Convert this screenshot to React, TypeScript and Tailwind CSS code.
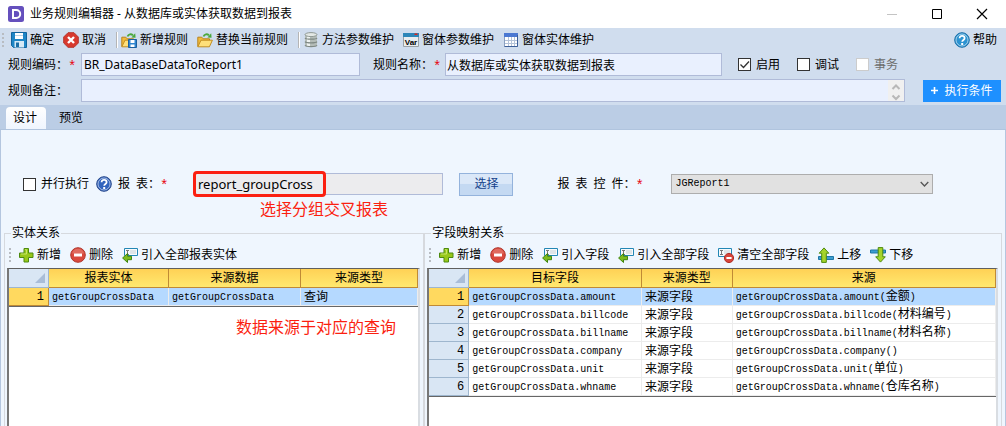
import type { ReactNode } from "react";

const cjk = "font-['Noto_Sans','Noto_Sans_CJK_SC',sans-serif]";

function Icon({ children }: { children: ReactNode }) {
  return (
    <svg className="h-4 w-4 shrink-0" viewBox="0 0 16 16" fill="none">
      {children}
    </svg>
  );
}

const SaveIcon = () => (
  <Icon>
    <path d="M.5.5h15v15H2.5l-2-2z" fill="#1f86c6" stroke="#11659f" />
    <path d="M4 1h8v6H4z" fill="#fff" />
    <path d="M4 3h8v1H4z" fill="#b9d4e6" />
    <path d="M3.5 9h9.5v6.5H3.5z" fill="#d7eaf6" />
    <path d="M5 10.5h3V15H5z" fill="#1b6ea6" />
  </Icon>
);

const CancelIcon = () => (
  <Icon>
    <path
      d="M5 .7h6L15.3 5v6L11 15.3H5L.7 11V5z"
      fill="#d8392e"
      stroke="#b5382f"
      strokeLinejoin="round"
    />
    <path d="M5 5l6 6M11 5l-6 6" stroke="#fff" strokeWidth="2.4" />
  </Icon>
);

const FolderBase = () => (
  <>
    <path d="M.8 14.5V5.2h4l1.4 1.6h6.3v2" fill="#f1bb3c" stroke="#b9831c" />
    <path d="M.8 14.8L4 8.2h11.4l-3 6.6z" fill="#ffe07a" stroke="#c28d20" />
    <path d="M6.5 4.5C7.5 2 10 1.8 12 3.2" stroke="#4ba83c" strokeWidth="2" />
    <path d="M10.4 5.6l4.2.2-.4-4.6z" fill="#4ba83c" />
  </>
);

const FolderSaveIcon = () => (
  <Icon>
    <FolderBase />
    <path d="M7.5 7.5h8v8h-8z" fill="#2f86d0" stroke="#1b5f9e" />
    <path d="M9.5 8h4v3h-4zM9.5 12.5h4V15h-4z" fill="#fff" />
  </Icon>
);

const FolderIcon = () => (
  <Icon>
    <FolderBase />
  </Icon>
);

const DatabaseIcon = () => (
  <Icon>
    <path d="M2 2.5v11C2 15 14 15 14 13.5v-11z" fill="#b4bcb8" />
    <path d="M4 4v10.5h3V4z" fill="#eef2f0" />
    <ellipse cx="8" cy="2.6" rx="6" ry="2" fill="#e3e8e5" stroke="#8f9994" />
    <path
      d="M2 6c1 1.6 11 1.6 12 0M2 9.6c1 1.6 11 1.6 12 0M2 13.2c1 1.8 11 1.8 12 0"
      stroke="#7f8984"
      strokeWidth="1.2"
    />
  </Icon>
);

const VarIcon = () => (
  <Icon>
    <path d="M.5 1.5h15v13H.5z" fill="#e9edf0" stroke="#9aa1a6" />
    <path d="M0 1h16v4H0z" fill="#2e86b8" />
    <path d="M11.5 1.5h3V3h-3z" fill="#e0261c" />
    <text
      x="8"
      y="12.5"
      textAnchor="middle"
      className="fill-black font-['Liberation_Sans',sans-serif] text-[8px] font-bold"
    >
      Var
    </text>
  </Icon>
);

const GridIcon = () => (
  <Icon>
    <path d="M1.5 1.5h13v13h-13z" fill="#fff" stroke="#8aa0c0" />
    <path d="M1 1h14v4H1z" fill="#4b78d2" />
    <path d="M2 8.5h12M2 11.5h12M5.5 5v9M8.5 5v9M11.5 5v9" stroke="#b4c3d9" />
    <path d="M14.5 3v11.5h-13" stroke="#3d5f98" />
  </Icon>
);

const AddIcon = () => (
  <Icon>
    <path
      d="M6 1.5h4.5V6H15v4.5h-4.5V15H6v-4.5H1.5V6H6z"
      fill="#97c81a"
      stroke="#4d8a0e"
      strokeLinejoin="round"
    />
    <path d="M7 2.7h1.5V7H3" stroke="#c6e568" />
  </Icon>
);

const RemoveIcon = () => (
  <Icon>
    <circle cx="8" cy="8" r="7.3" fill="#d9493d" stroke="#b0362c" />
    <path d="M2 6.5a6.2 6.2 0 0112 0z" fill="#e06a5e" />
    <path d="M4 6.5h8v3H4z" fill="#fff" />
  </Icon>
);

const ImportIcon = () => (
  <Icon>
    <path d="M2.5 1.5h13v7h-13z" fill="#f7fafc" stroke="#2387b5" />
    <path d="M4 3.5h3M5.5 3.5v4M4 7.5h3" stroke="#777" />
    <path d="M8 3h6v4H8z" fill="#dfe5e8" />
    <path
      d="M.6 11L5.5 6.5v2.8h4v3.4h-4v2.8z"
      fill="#7dbb1c"
      stroke="#3f850f"
      strokeLinejoin="round"
    />
  </Icon>
);

const ClearIcon = () => (
  <Icon>
    <path d="M.5 1.5h13v8H.5z" fill="#f7fafc" stroke="#2387b5" />
    <path d="M2 3.5h3M3.5 3.5v4M2 7.5h3" stroke="#777" />
    <path d="M6 3h6v4H6z" fill="#dfe5e8" />
    <circle cx="11" cy="11" r="4.6" fill="#d8443a" stroke="#ae3028" />
    <path d="M8.4 10h5.2v2H8.4z" fill="#fff" />
  </Icon>
);

const UpIcon = () => (
  <Icon>
    <path d="M.5 9.5h5v3h-5zM8.5 9.5h7v3h-7z" fill="#3d9ed0" stroke="#1e76a6" />
    <path
      d="M6 .9l4.8 5.3H8.3v9.2H3.7V6.2H1.2z"
      fill="#a5d42a"
      stroke="#4d8a0e"
      strokeLinejoin="round"
    />
  </Icon>
);

const DownIcon = () => (
  <Icon>
    <path d="M.5 3h8v3h-8zM12 3h3.5v3H12z" fill="#3d9ed0" stroke="#1e76a6" />
    <path
      d="M10.5 15.1L5.7 9.8h2.5V.6h4.6v9.2h2.5z"
      fill="#a5d42a"
      stroke="#4d8a0e"
      strokeLinejoin="round"
    />
  </Icon>
);

function HelpIcon({ fill, stroke }: { fill: string; stroke: string }) {
  return (
    <Icon>
      <circle cx="8" cy="8" r="7.3" fill={fill} stroke={stroke} />
      <circle cx="8" cy="8" r="6" stroke="#fff" strokeOpacity=".55" />
      <path
        d="M5.6 6.2c0-3.2 5-3.1 5 0 0 1.8-2.4 1.8-2.4 3.6"
        stroke="#fff"
        strokeWidth="1.8"
      />
      <path d="M7.2 11h2v2h-2z" fill="#fff" />
    </Icon>
  );
}

function ToolButton({ icon, label }: { icon: ReactNode; label: string }) {
  return (
    <button
      type="button"
      className="mr-[9px] flex items-center gap-[3px] whitespace-nowrap leading-4"
    >
      {icon}
      {label}
    </button>
  );
}

function Separator() {
  return (
    <div className="flex w-1.5 pl-px">
      <div className="h-4 w-0.5 border-l border-[#b5b5b5] bg-white" />
    </div>
  );
}

function Grip() {
  return (
    <div className="flex w-[9px] shrink-0 flex-col gap-0.5">
      <i className="h-0.5 w-0.5 bg-[#b8bcc2]" />
      <i className="h-0.5 w-0.5 bg-[#b8bcc2]" />
      <i className="h-0.5 w-0.5 bg-[#b8bcc2]" />
      <i className="h-0.5 w-0.5 bg-[#b8bcc2]" />
    </div>
  );
}

function Star() {
  return (
    <span className="pt-1 font-['Liberation_Mono',monospace] text-sm leading-4 text-red-600">
      *
    </span>
  );
}

interface CheckProps {
  label: string;
  checked?: boolean;
  disabled?: boolean;
}

function Check({ label, checked, disabled }: CheckProps) {
  return (
    <label
      className={`flex items-center gap-[5px] whitespace-nowrap ${disabled ? "text-[#6d6d6d]" : ""}`}
    >
      <span className="relative flex">
        <input
          type="checkbox"
          defaultChecked={checked}
          disabled={disabled}
          className="peer h-[13px] w-[13px] appearance-none border border-[#333] bg-white disabled:border-[#ccc]"
        />
        <svg
          className="pointer-events-none absolute inset-0 hidden h-[13px] w-[13px] peer-checked:block"
          viewBox="0 0 13 13"
          fill="none"
        >
          <path d="M2.5 6.5l3 3 5.5-6" stroke="#333" strokeWidth="1.3" />
        </svg>
      </span>
      {label}
    </label>
  );
}

// Latin runs are set in the fixed-width face, everything else stays at 12px.
function Mixed({ text }: { text: string }) {
  return text.split(/([\x20-\x7e]+)/).map((part, i) =>
    i % 2 ? (
      <span
        key={i}
        className="font-['Liberation_Mono',monospace] text-[10px]"
      >
        {part}
      </span>
    ) : (
      part
    ),
  );
}

interface Column {
  title: string;
  width: string;
}

function DataGrid({ columns, rows }: { columns: Column[]; rows: string[][] }) {
  return (
    <div className="flex-1 border-t border-r-2 border-l-2 border-t-[#5f5f5f] border-r-[#d9dde2] border-l-[#777] bg-white">
      <table className="w-full table-fixed border-separate border-spacing-0 border-b border-[#666]">
        <colgroup>
          <col className="w-10" />
          {columns.map((c) => (
            <col key={c.title} className={c.width} />
          ))}
        </colgroup>
        <thead>
          <tr>
            <th className="h-[19px] border-r border-b border-[#9eb6ce] bg-[#d9e6f4] p-0">
              <svg className="mr-0.5 ml-auto h-3 w-3" viewBox="0 0 12 12">
                <path d="M11 1v10H1z" fill="#a9bdd8" />
              </svg>
            </th>
            {columns.map((c) => (
              <th
                key={c.title}
                className="h-[19px] border-r border-b border-[#c08a35] bg-linear-to-b from-[#ffd155] to-[#ffe96f] p-0 leading-4 font-normal"
              >
                {c.title}
              </th>
            ))}
          </tr>
        </thead>
        <tbody>
          {rows.map((row, i) => (
            <tr key={row[0]} className={i === 0 ? "bg-[#b5d9ff]" : "bg-white"}>
              <th
                className={`h-[18px] border-r border-b py-0 pr-1 text-right font-['Liberation_Mono',monospace] leading-[14px] font-normal ${
                  i === 0
                    ? "border-[#c08a35] bg-[#ffd95f]"
                    : "border-[#9eb6ce] bg-[#d9e6f4]"
                }`}
              >
                {i + 1}
              </th>
              {row.map((cell, j) => (
                <td
                  key={j}
                  className="h-[18px] overflow-hidden border-r border-b border-[#ececec] py-0 pl-[3px] leading-[14px] whitespace-nowrap"
                >
                  <Mixed text={cell} />
                </td>
              ))}
            </tr>
          ))}
        </tbody>
      </table>
    </div>
  );
}

const entityColumns = [
  { title: "报表实体", width: "w-[29.3%]" },
  { title: "来源数据", width: "w-[32.3%]" },
  { title: "来源类型", width: "w-auto" },
];

const entityRows = [["getGroupCrossData", "getGroupCrossData", "查询"]];

const fieldColumns = [
  { title: "目标字段", width: "w-[30.5%]" },
  { title: "来源类型", width: "w-[16%]" },
  { title: "来源", width: "w-auto" },
];

const fieldRows = [
  ["amount", "金额"],
  ["billcode", "材料编号"],
  ["billname", "材料名称"],
  ["company", ""],
  ["unit", "单位"],
  ["whname", "仓库名称"],
].map(([name, title]) => [
  `getGroupCrossData.${name}`,
  "来源字段",
  `getGroupCrossData.${name}(${title})`,
]);

const field = "border border-[#b0bbd8] bg-[#e9f0fe] outline-none";

export default function App() {
  return (
    <div
      className={`flex min-h-screen flex-col bg-[#d0ddee] text-xs text-black ${cjk}`}
    >
      <header className="flex h-7 items-center bg-white pl-2">
        <svg className="mr-1.5 h-4 w-4" viewBox="0 0 16 16" fill="none">
          <rect width="16" height="16" rx="2.5" fill="#6550bd" />
          <path d="M5 4h3.2a4 4 0 010 8H5z" stroke="#fff" strokeWidth="2" />
        </svg>
        <h1 className="flex-1 leading-4">
          业务规则编辑器 - 从数据库或实体获取数据到报表
        </h1>
        <button type="button" aria-label="最小化" className="w-[45px] pl-[15px]">
          <svg className="h-3 w-3" viewBox="0 0 12 12">
            <path d="M1 6.5h10" stroke="#c4c4c4" />
          </svg>
        </button>
        <button type="button" aria-label="最大化" className="w-[45px] pl-[15px]">
          <svg className="h-3 w-3" viewBox="0 0 12 12" fill="none">
            <path d="M1.5 1.5h9v9h-9z" stroke="#000" />
          </svg>
        </button>
        <button type="button" aria-label="关闭" className="w-[45px] pl-[15px]">
          <svg className="h-3 w-3" viewBox="0 0 12 12">
            <path d="M1 1l10 10M11 1L1 11" stroke="#000" strokeWidth="1.2" />
          </svg>
        </button>
      </header>

      <div className="flex h-6 items-center pl-0.5">
        <Grip />
        <ToolButton icon={<SaveIcon />} label="确定" />
        <ToolButton icon={<CancelIcon />} label="取消" />
        <Separator />
        <ToolButton icon={<FolderSaveIcon />} label="新增规则" />
        <ToolButton icon={<FolderIcon />} label="替换当前规则" />
        <Separator />
        <ToolButton icon={<DatabaseIcon />} label="方法参数维护" />
        <ToolButton icon={<VarIcon />} label="窗体参数维护" />
        <ToolButton icon={<GridIcon />} label="窗体实体维护" />
        <div className="flex-1" />
        <ToolButton
          icon={<HelpIcon fill="#2c93d1" stroke="#1b6fa8" />}
          label="帮助"
        />
      </div>

      <div className="mt-px flex h-[23px] items-center pl-2">
        <label htmlFor="code" className="flex w-[73px] items-center">
          规则编码：
          <Star />
        </label>
        <input
          id="code"
          defaultValue="BR_DataBaseDataToReport1"
          className={`h-[23px] w-0 flex-1 px-0.5 ${field}`}
        />
        <label htmlFor="name" className="ml-[13px] flex w-[72px] items-center">
          规则名称：
          <Star />
        </label>
        <input
          id="name"
          defaultValue="从数据库或实体获取数据到报表"
          className={`h-[23px] w-0 flex-1 px-px ${field}`}
        />
        <div className="flex w-[284px] gap-[17px] pl-4">
          <Check label="启用" checked />
          <Check label="调试" />
          <Check label="事务" disabled />
        </div>
      </div>

      <div className="mt-[3px] mb-[3px] flex h-[23px] items-center pr-[5px] pl-2">
        <label htmlFor="note" className="w-[73px]">
          规则备注：
        </label>
        <div className={`flex h-[23px] flex-1 ${field}`}>
          <textarea
            id="note"
            className="h-full w-0 flex-1 resize-none outline-none"
          />
          <svg
            className="h-full w-4 bg-[#f0f0f0]"
            viewBox="0 0 16 21"
            fill="none"
          >
            <path
              d="M4.5 9L8 5.5 11.5 9M4.5 15.5L8 19l3.5-3.5"
              stroke="#b8b8b8"
              strokeWidth="2"
            />
          </svg>
        </div>
        <button
          type="button"
          className="ml-[18px] flex h-[22px] w-[78px] items-center justify-center gap-1.5 bg-[#1e90ff] text-white"
        >
          <svg className="h-[7px] w-[7px]" viewBox="0 0 7 7">
            <path d="M3.5 0v7M0 3.5h7" stroke="#fff" strokeWidth="1.6" />
          </svg>
          执行条件
        </button>
      </div>

      <nav className="flex h-[25px] items-end border-b border-[#b0c4de] bg-[#bbcde5] pl-1.5">
        <button
          type="button"
          className="h-[22px] w-10 rounded-t-sm bg-linear-to-b from-white to-[#eff5fe] pr-0.5 leading-4"
        >
          设计
        </button>
        <button type="button" className="h-[22px] w-[50px] leading-4">
          预览
        </button>
      </nav>

      <main className="flex flex-1 flex-col border-x border-[#b4c6df] bg-[#eff6fe]">
        <div className="mt-[42px] flex h-6 items-center pl-[22px]">
          <Check label="并行执行" />
          <span className="mr-1.5 ml-[7px]">
            <HelpIcon fill="#3264bd" stroke="#27478a" />
          </span>
          <label htmlFor="report" className="flex w-[77px] items-center">
            <span className="mr-1.5">报</span>
            <span>表：</span>
            <Star />
          </label>
          <div className="relative w-[25.3%]">
            <input
              id="report"
              readOnly
              defaultValue="report_groupCross"
              className="h-[22px] w-full border border-[#b0bbd8] bg-[#ececee] px-0.5 text-[13px] outline-none"
            />
            <div className="pointer-events-none absolute -top-0.5 -left-0.5 h-[26px] w-[133px] rounded-sm border-3 border-[#fb1f10]" />
            <p className="absolute top-6 left-[65px] text-base leading-6 whitespace-nowrap text-[#fb1f10]">
              选择分组交叉报表
            </p>
          </div>
          <button
            type="button"
            className="mr-11 ml-4 h-[23px] w-[54px] border border-[#94b3dc] bg-linear-to-b from-[#dbe8f8] from-45% to-[#c4d9f2] to-50% leading-4 text-[#15428b]"
          >
            选择
          </button>
          <label
            htmlFor="control"
            className="flex w-[114px] items-center whitespace-nowrap"
          >
            <span className="mr-1.5">报</span>
            <span className="mr-1.5">表</span>
            <span className="mr-1.5">控</span>
            <span>件：</span>
            <Star />
          </label>
          <div className="relative w-[26.6%]">
            <select
              id="control"
              className="block h-5 w-full appearance-none border border-[#adadad] bg-[#e1e1e1] px-[3px] font-['Liberation_Mono',monospace] text-[10px]"
            >
              <option>JGReport1</option>
            </select>
            <svg
              className="pointer-events-none absolute top-1.5 right-1 h-2 w-[9px]"
              viewBox="0 0 9 8"
              fill="none"
            >
              <path d="M.7 2l3.8 4 3.8-4" stroke="#555" strokeWidth="1.3" />
            </svg>
          </div>
        </div>

        <div className="mt-[29px] flex flex-1 px-[3px]">
          <fieldset className="relative flex w-[42.2%] flex-col border-t border-r-2 border-l border-[#d6d9de] pr-[3px] pl-0.5">
            <legend className="ml-1 px-px leading-4">实体关系</legend>
            <div className="flex h-[27px] items-center pl-0.5">
              <Grip />
              <ToolButton icon={<AddIcon />} label="新增" />
              <ToolButton icon={<RemoveIcon />} label="删除" />
              <ToolButton icon={<ImportIcon />} label="引入全部报表实体" />
            </div>
            <DataGrid columns={entityColumns} rows={entityRows} />
            <p className="absolute top-[74px] left-[231px] text-base leading-6 whitespace-nowrap text-[#fb1f10]">
              数据来源于对应的查询
            </p>
          </fieldset>
          <fieldset className="flex min-w-0 flex-1 flex-col border-t border-r border-[#d6d9de] pr-[3px] pl-0.5">
            <legend className="ml-1 px-px leading-4">字段映射关系</legend>
            <div className="flex h-[27px] items-center pl-0.5">
              <Grip />
              <ToolButton icon={<AddIcon />} label="新增" />
              <ToolButton icon={<RemoveIcon />} label="删除" />
              <ToolButton icon={<ImportIcon />} label="引入字段" />
              <ToolButton icon={<ImportIcon />} label="引入全部字段" />
              <ToolButton icon={<ClearIcon />} label="清空全部字段" />
              <ToolButton icon={<UpIcon />} label="上移" />
              <ToolButton icon={<DownIcon />} label="下移" />
            </div>
            <DataGrid columns={fieldColumns} rows={fieldRows} />
          </fieldset>
        </div>
      </main>
    </div>
  );
}
